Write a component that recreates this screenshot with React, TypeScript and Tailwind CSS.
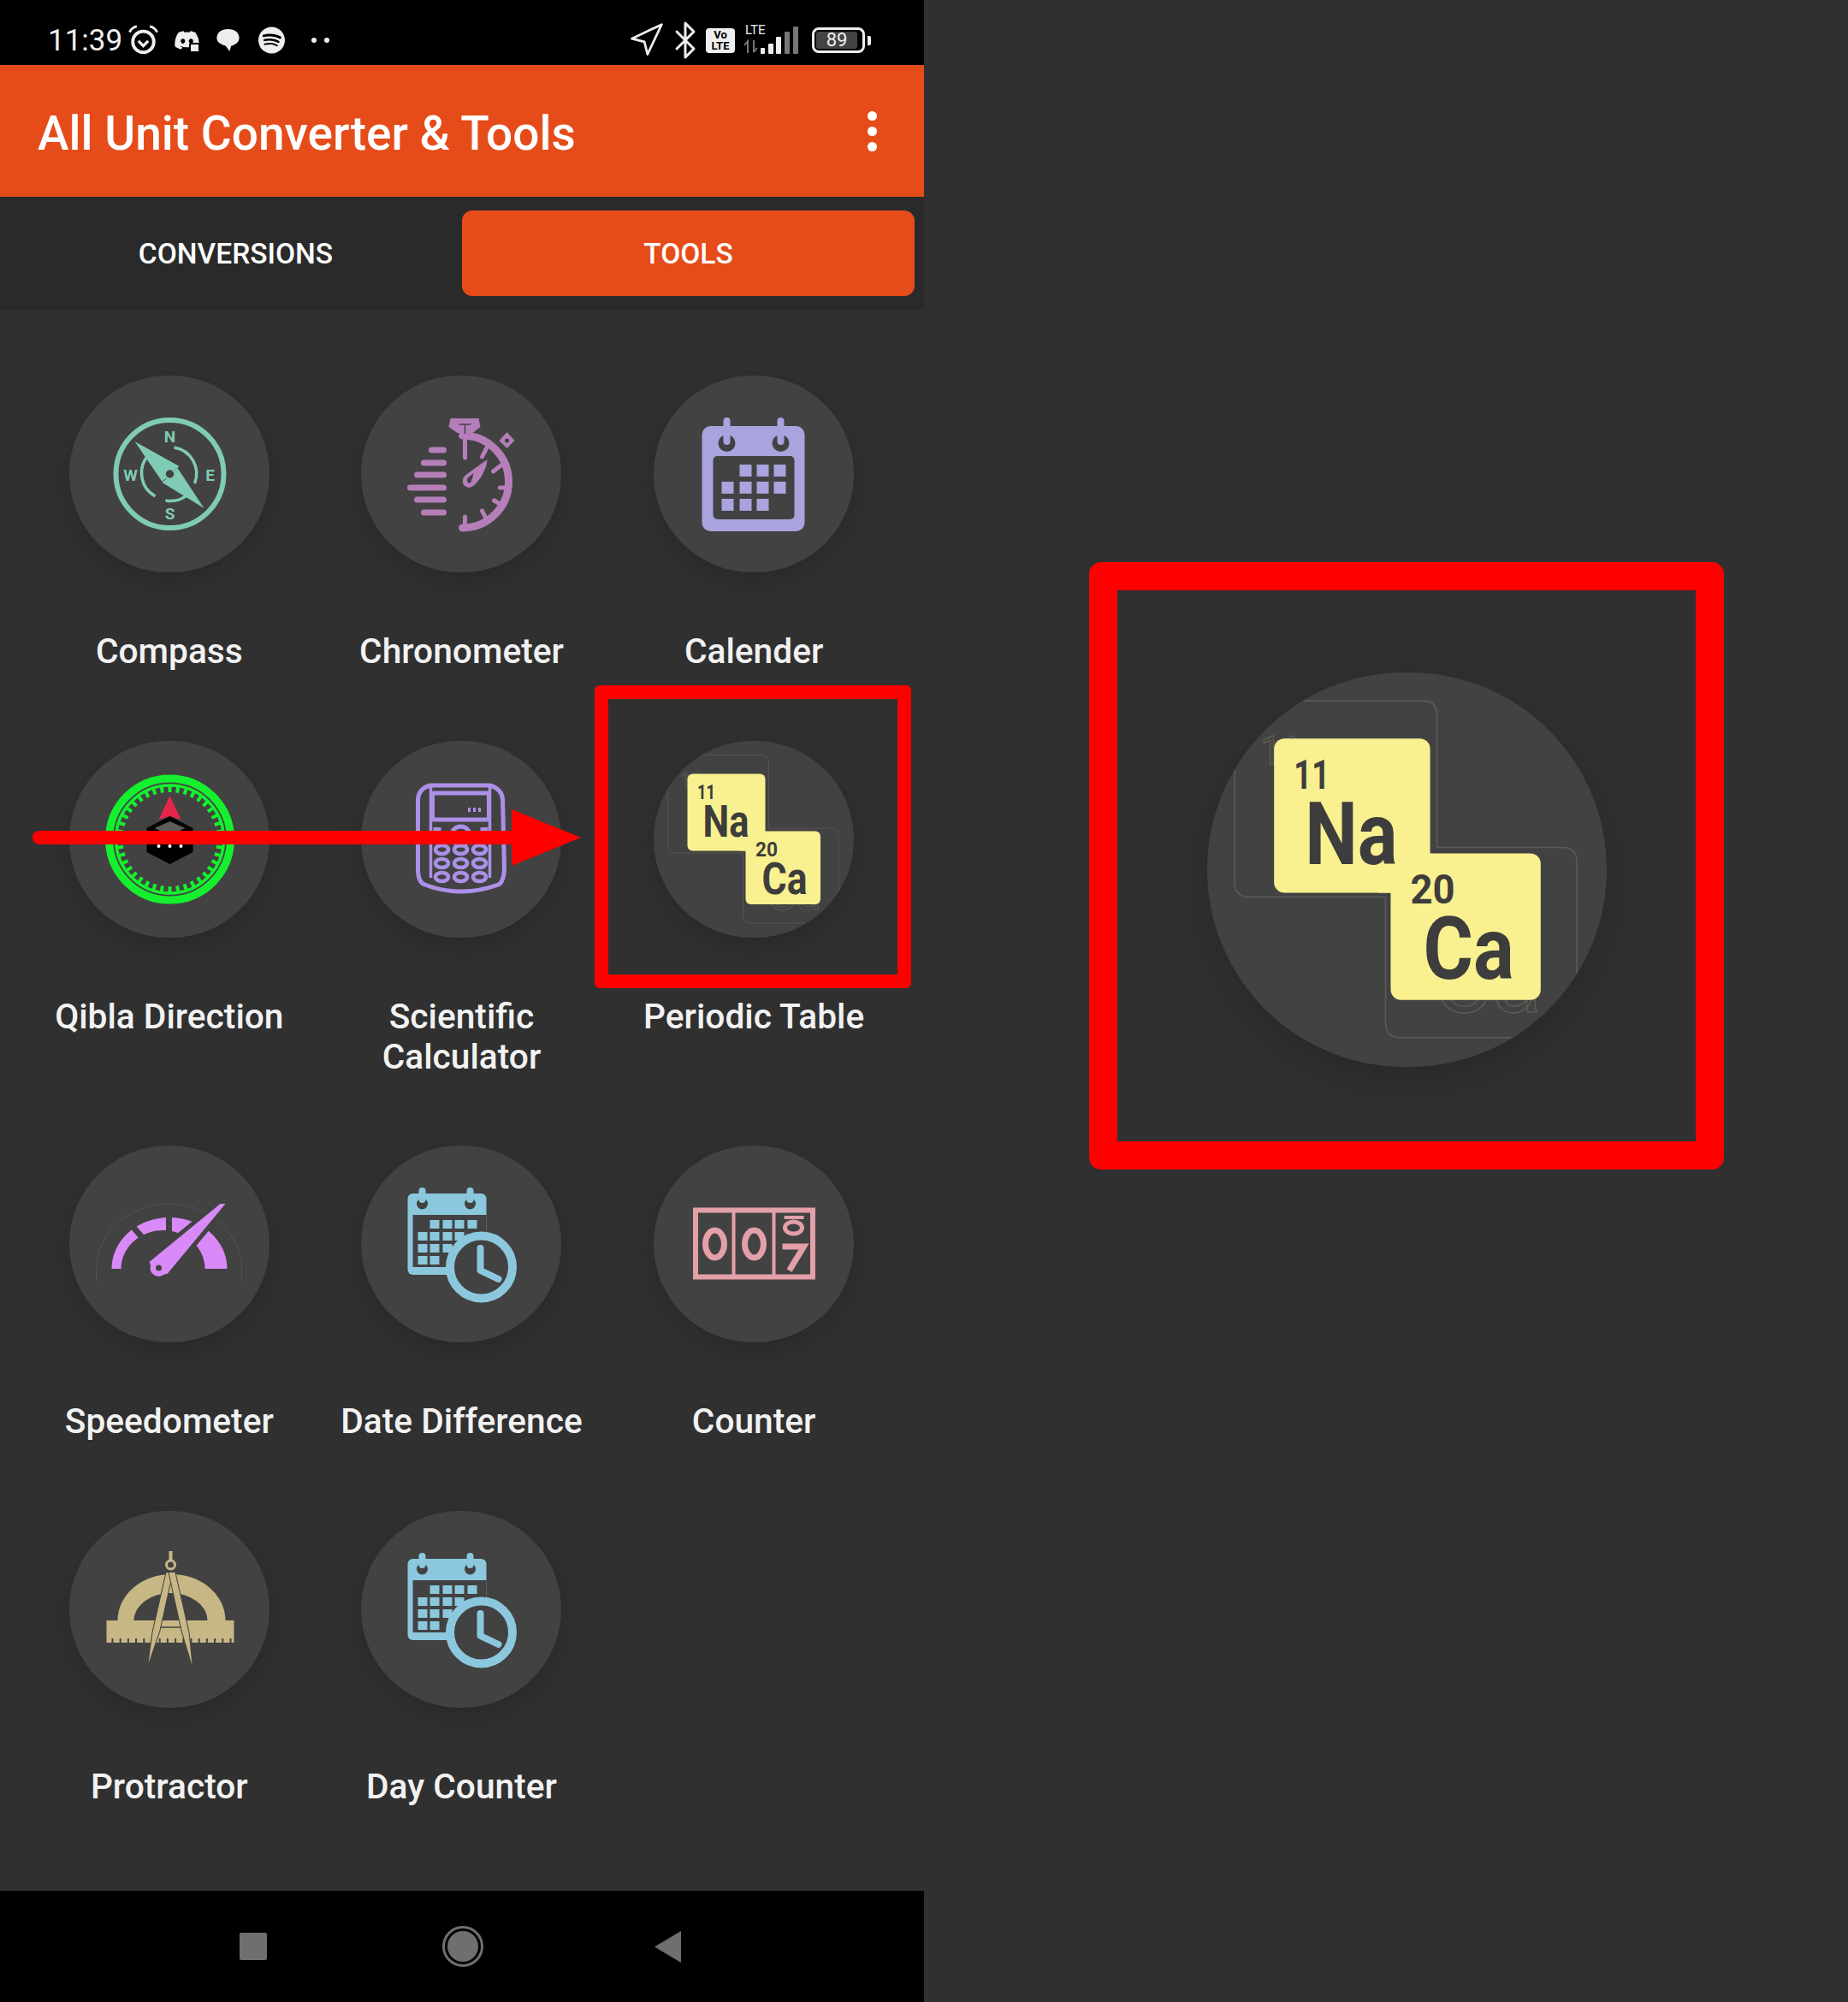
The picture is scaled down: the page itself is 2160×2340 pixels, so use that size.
import React, { useId } from 'react';
import { Bluetooth, Navigation } from 'lucide-react';
import { FaDiscord, FaSpotify } from 'react-icons/fa6';

const CIRCLE = '#424242';

const CompassIcon = () => (
  <svg viewBox="0 0 233 230" className="size-full">
    <g fill="none" stroke="#80cbb5">
      <circle cx="117" cy="115" r="63" strokeWidth="6" />
      <path d="M93 92 A 31 31 0 0 0 100 141" strokeWidth="3.5" />
      <path d="M122 84 A 31 31 0 0 1 146 126 M140 137 A 31 31 0 0 1 112 146" strokeWidth="3.5" />
    </g>
    <polygon points="76,77 128,106 108,124" fill="#80cbb5" />
    <polygon points="157,155 126,108 108,125" fill="#80cbb5" />
    <circle cx="117" cy="115" r="5.5" fill={CIRCLE} stroke="#80cbb5" strokeWidth="1.5" />
    <g fill="#80cbb5" fontFamily="Roboto, sans-serif" fontWeight="700" fontSize="19" textAnchor="middle">
      <text x="117" y="78">N</text>
      <text x="117" y="168">S</text>
      <text x="164" y="123">E</text>
      <text x="71" y="123">W</text>
    </g>
  </svg>
);

const ChronometerIcon = () => (
  <svg viewBox="0 0 233 230" className="size-full">
    <g fill="none" stroke="#b57eb9" strokeLinecap="round">
      <path d="M118 70 A 54 54 0 0 1 118 178" strokeWidth="9" />
      <g strokeWidth="7">
        <path d="M82 87H96M73 102H96M65 116H96M57 131H96M65 145H96M73 160H96" />
      </g>
      <g strokeWidth="5">
        <path d="M121 75V96M146 85L141 95M163 105L154 112M171 131H162M165 152L155 146M146 168L141 158M121 177V165" />
      </g>
    </g>
    <path d="M104 50 H137 L139 60 L130 67 H112 L102 60 Z" fill="#b57eb9" />
    <path d="M114 57H128M121 57V68" stroke={CIRCLE} strokeWidth="1.5" fill="none" />
    <polygon points="170,66 179,76 170,85 161,76" fill="#b57eb9" />
    <circle cx="170" cy="76" r="2.5" fill={CIRCLE} />
    <path d="M147 98 C 146 112 134 130 126 131 C 117 130 116 121 122 116 Z" fill="#b57eb9" />
    <path d="M127 126 C 123 125 122 122 125 119 L 131 114 C 130 119 129 123 127 126 Z" fill={CIRCLE} />
  </svg>
);

const CalendarIcon = () => {
  const cols = [79, 100, 120, 140];
  const rows: [number, number[]][] = [
    [104, [1, 2, 3]],
    [124, [0, 1, 2, 3]],
    [144, [0, 1, 2]],
  ];
  return (
    <svg viewBox="0 0 233 230" className="size-full">
      <rect x="56" y="59" width="120" height="123" rx="10" fill="#a9a3de" />
      <rect x="69" y="94" width="95" height="74" rx="5" fill={CIRCLE} />
      {[85, 148].map((x) => (
        <g key={x}>
          <ellipse cx={x} cy="79" rx="10" ry="10" fill={CIRCLE} />
          <rect x={x - 4} y="49" width="8" height="32" rx="4" fill="#a9a3de" />
        </g>
      ))}
      {rows.map(([y, list]) =>
        list.map((c) => <rect key={`${y}-${c}`} x={cols[c]} y={y} width="14" height="14" fill="#a9a3de" />)
      )}
    </svg>
  );
};

const QiblaIcon = () => {
  const ticks = Array.from({ length: 40 }, (_, i) => (i * 360) / 40);
  return (
    <svg viewBox="0 0 233 230" className="size-full">
      <circle cx="117" cy="115" r="71" fill="none" stroke="#14f02e" strokeWidth="9" />
      <circle cx="117" cy="115" r="63" fill="none" stroke="#14f02e" strokeWidth="3.5" />
      {ticks.map((a) => (
        <rect key={a} x="115" y="53" width="4" height="7" fill="#14f02e" transform={`rotate(${a} 117 115)`} />
      ))}
      <polygon points="117,64 130,92 117,88 104,92" fill="#e8244c" />
      <polygon points="117,88 144,102 144,130 117,144 90,130 90,102" fill="#000" />
      <polygon points="117,94 135,102 117,110 99,102" fill="#5c5c5c" />
      <g fill="#fff">
        <circle cx="104" cy="123" r="2" />
        <circle cx="117" cy="123" r="2" />
        <circle cx="130" cy="123" r="2" />
      </g>
    </svg>
  );
};

const CalculatorIcon = () => (
  <svg viewBox="0 0 233 230" className="size-full">
    <g fill="none" stroke="#ac90e8" strokeWidth="5">
      <path d="M66 68 Q67 56 80 52 H150 Q164 56 165 68 L167 150 Q166 165 160 168 Q116 184 74 168 Q66 165 66 150 Z" />
      <path d="M81 54 V 160 M150 54 V 160" strokeWidth="3.5" />
      <rect x="83" y="61" width="66" height="31" rx="2" />
      <circle cx="116" cy="111" r="11" />
    </g>
    <path d="M126 83V78M132 83V78M138 83V78" stroke="#ac90e8" strokeWidth="3" />
    <rect x="84" y="101" width="9" height="9" fill="#ac90e8" />
    <rect x="139" y="101" width="9" height="9" fill="#ac90e8" />
    {[127, 143, 159].map((y) =>
      [94, 116, 138].map((x) => (
        <ellipse key={`${x}-${y}`} cx={x} cy={y} rx="7.5" ry="5" fill="none" stroke="#ac90e8" strokeWidth="4.5" />
      ))
    )}
  </svg>
);

const PeriodicIcon = () => {
  const clip = useId();
  const ghost = '#5b5b55';
  const ink = '#3d3d3d';
  return (
    <svg viewBox="0 0 233 230" className="size-full" fontFamily="Roboto, sans-serif">
      <clipPath id={clip}>
        <ellipse cx="116.5" cy="115" rx="116.5" ry="115" />
      </clipPath>
      <g clipPath={`url(#${clip})`} fill="none" stroke={ghost} strokeWidth="0.8">
        <path d="M24 16.5 H126 Q134 16.5 134 25 V102 H207 Q215.5 102 215.5 110 V205 Q215.5 213 207 213 H113 Q104 213 104 204 V131 H25 Q16 131 16 122 V25 Q16 16.5 24 16.5 Z" />
        <text x="31" y="54" fontSize="24" textLength="24" lengthAdjust="spacingAndGlyphs">11</text>
        <text x="132" y="198" fontSize="50" textLength="63" lengthAdjust="spacingAndGlyphs">Ca</text>
      </g>
      <rect x="39" y="38.5" width="91" height="90" rx="6" fill="#f9f08f" />
      <rect x="107" y="105.5" width="87.5" height="85.5" rx="6" fill="#f9f08f" />
      <rect x="100" y="105.5" width="30" height="23" fill="#f9f08f" />
      <g fill={ink} fontWeight="700">
        <text x="50.5" y="68" fontSize="24" textLength="21" lengthAdjust="spacingAndGlyphs">11</text>
        <text x="57" y="112" fontSize="51" textLength="54" lengthAdjust="spacingAndGlyphs">Na</text>
        <text x="118.5" y="134.5" fontSize="24" textLength="26" lengthAdjust="spacingAndGlyphs">20</text>
        <text x="126" y="178.5" fontSize="51" textLength="53" lengthAdjust="spacingAndGlyphs">Ca</text>
      </g>
    </svg>
  );
};

const SpeedometerIcon = () => (
  <svg viewBox="0 0 233 230" className="size-full">
    <path d="M31 159 V146 A 85 78 0 0 1 201 146 V159" fill="none" stroke="#5d5560" strokeWidth="1" strokeDasharray="3 1" />
    <path d="M49 144 A 67.5 60 0 0 1 184 144 H158 A 49 45 0 0 0 60 144 Z" fill="#d98af8" />
    <path d="M66 86 L87 110 M116 68 V112" stroke={CIRCLE} strokeWidth="7" fill="none" />
    <polygon
      points="182,68 176,68 93,136 100,152 114,150"
      fill="#d98af8"
      stroke={CIRCLE}
      strokeWidth="10"
      strokeLinejoin="round"
      paintOrder="stroke"
    />
    <circle cx="104" cy="143" r="10" fill="#d98af8" />
    <circle cx="104" cy="143" r="3.5" fill={CIRCLE} />
  </svg>
);

const CalendarClockIcon = () => {
  const cols = [66, 80, 95, 109, 124];
  const rows: [number, number[]][] = [
    [87, [1, 2, 3, 4]],
    [101, [0, 1, 2, 3]],
    [115, [0, 1, 2]],
    [129, [0, 1]],
  ];
  return (
    <svg viewBox="0 0 233 230" className="size-full">
      <rect x="54" y="56" width="92" height="95" rx="6" fill="#8cc8dd" />
      <rect x="60" y="81" width="86" height="61" fill={CIRCLE} />
      {[71, 127].map((x) => (
        <g key={x}>
          <circle cx={x} cy="68" r="6.5" fill={CIRCLE} />
          <rect x={x - 4} y="49" width="8" height="18" rx="4" fill="#8cc8dd" />
        </g>
      ))}
      {rows.map(([y, list]) =>
        list.map((c) => <rect key={`${y}-${c}`} x={cols[c]} y={y} width="11" height="10" fill="#8cc8dd" />)
      )}
      <circle cx="140" cy="142" r="36.5" fill={CIRCLE} stroke="#8cc8dd" strokeWidth="10" />
      <path d="M139 120 V146 L160 156" fill="none" stroke="#8cc8dd" strokeWidth="8" strokeLinecap="round" strokeLinejoin="round" />
    </svg>
  );
};

const CounterIcon = () => (
  <svg viewBox="0 0 233 230" className="size-full">
    <g fill="none" stroke="#e3a0a8">
      <rect x="48.5" y="75.5" width="137" height="78" strokeWidth="6" />
      <path d="M93 75V154M140 75V154" strokeWidth="4" />
      <ellipse cx="71" cy="115" rx="11" ry="16" strokeWidth="7" />
      <ellipse cx="117" cy="115" rx="11" ry="16" strokeWidth="7" />
      <ellipse cx="163" cy="96" rx="10" ry="7" strokeWidth="5" />
      <path d="M152 84 H175" strokeWidth="4" />
      <path d="M150 118 H175 L158 146" strokeWidth="7" />
    </g>
  </svg>
);

const ProtractorIcon = () => {
  const notches = Array.from({ length: 16 }, (_, i) => 49 + i * 9.2);
  return (
    <svg viewBox="0 0 233 230" className="size-full">
      <path d="M56 128 A 63 54 0 0 1 182 128 H161 A 43 32 0 0 0 75 128 Z" fill="#c7b785" />
      <rect x="43" y="128" width="149" height="26" fill="#c7b785" />
      {notches.map((x) => (
        <rect key={x} x={x} y="149" width="2" height="5" fill={CIRCLE} />
      ))}
      <rect x="116" y="47" width="4" height="14" fill="#c7b785" />
      <polygon points="113,72 97,142 92,178 105,140 120,72" fill="#c7b785" stroke={CIRCLE} strokeWidth="2" paintOrder="stroke" />
      <polygon points="123,72 139,142 143,180 131,140 116,72" fill="#c7b785" stroke={CIRCLE} strokeWidth="2" paintOrder="stroke" />
      <circle cx="118" cy="63" r="5" fill={CIRCLE} stroke="#c7b785" strokeWidth="3" />
      <path d="M106 136 H130" stroke={CIRCLE} strokeWidth="1.5" />
    </svg>
  );
};

const AlarmIcon = () => (
  <svg viewBox="0 0 40 38" className="w-[39px] h-[36px] ml-[10px]" fill="none" stroke="#eee">
    <circle cx="20" cy="21" r="13" strokeWidth="4" />
    <path d="M14 20 L20 26 L26 20" strokeWidth="3.5" />
    <path d="M3 9 Q6 3 12 2 M37 9 Q34 3 28 2" strokeWidth="3" />
  </svg>
);

const SignalIcon = () => (
  <svg viewBox="0 0 65 32" className="w-[65px] h-[32px]">
    <path d="M5 18 V31 M1 22 L5 17 L5 31 M12 16 V30 M12 30 L16 25" stroke="#777" strokeWidth="2" fill="none" />
    <rect x="20" y="25" width="5" height="7" rx="1" fill="#eee" />
    <rect x="29" y="20" width="6" height="12" rx="1" fill="#eee" />
    <rect x="38" y="12" width="6" height="20" rx="1" fill="#eee" />
    <rect x="48" y="6" width="6" height="26" rx="1" fill="#777" />
    <rect x="58" y="0" width="6" height="32" rx="1" fill="#777" />
  </svg>
);

const tools: { name: string; icon: React.FC; lines?: string[] }[] = [
  { name: 'Compass', icon: CompassIcon },
  { name: 'Chronometer', icon: ChronometerIcon },
  { name: 'Calender', icon: CalendarIcon },
  { name: 'Qibla Direction', icon: QiblaIcon },
  { name: 'Scientific Calculator', icon: CalculatorIcon, lines: ['Scientific', 'Calculator'] },
  { name: 'Periodic Table', icon: PeriodicIcon },
  { name: 'Speedometer', icon: SpeedometerIcon },
  { name: 'Date Difference', icon: CalendarClockIcon },
  { name: 'Counter', icon: CounterIcon },
  { name: 'Protractor', icon: ProtractorIcon },
  { name: 'Day Counter', icon: CalendarClockIcon },
];

const StatusBar = () => (
  <div className="h-[76px] bg-black flex items-center justify-between pl-[56px] pr-[62px] pt-[18px] text-[#eeeeee] shrink-0">
    <div className="flex items-center">
      <span className="text-[35px] leading-none w-[82px]">11:39</span>
      <AlarmIcon />
      <div className="relative ml-[16px]">
        <FaDiscord className="w-[31px] h-[28px]" />
        <div className="absolute -bottom-[1px] right-0 w-[13px] h-[12px] rounded-[2px] bg-[#eeeeee] border-[2px] border-black" />
      </div>
      <svg viewBox="0 0 30 30" className="w-[29px] h-[28px] ml-[18px]" fill="#eee">
        <path d="M15 1 C 24 1 29 6 29 12 C 29 18 23 21 19 22 L 17 29 L 12 22 C 6 20 1 18 1 12 C 1 6 6 1 15 1 Z" />
      </svg>
      <FaSpotify className="w-[33px] h-[32px] ml-[20px]" />
      <div className="flex gap-[9px] ml-[30px]">
        <div className="size-[6px] rounded-full bg-[#eeeeee]" />
        <div className="size-[6px] rounded-full bg-[#eeeeee]" />
      </div>
    </div>
    <div className="flex items-center">
      <Navigation className="w-[44px] h-[44px]" strokeWidth={1.5} />
      <Bluetooth className="w-[48px] h-[48px]" strokeWidth={1.5} />
      <div className="w-[34px] h-[29px] rounded-[4px] bg-[#eeeeee] text-black text-[13px] leading-[13px] font-bold text-center pt-[1px]">
        <div>Vo</div>
        <div>LTE</div>
      </div>
      <div className="relative w-[65px] h-[32px] ml-[10px]">
        <SignalIcon />
        <span className="absolute -top-[3px] left-[2px] text-[15px] leading-none">LTE</span>
      </div>
      <div className="ml-[15px] w-[62px] h-[30px] rounded-[8px] border-[3px] border-[#eeeeee] p-[2px]">
        <div className="h-full w-[48px] rounded-[3px] bg-[#444444] text-[22px] leading-[20px] text-center">89</div>
      </div>
      <div className="w-[4px] h-[11px] ml-[3px] rounded-r-[2px] bg-[#eeeeee]" />
    </div>
  </div>
);

const AppBar = () => (
  <div className="h-[154px] bg-[#e54c19] flex items-center justify-between pl-[44px] pr-[55px] shrink-0">
    <span className="text-[55px] font-medium text-white leading-none mt-[6px]">All Unit Converter &amp; Tools</span>
    <div className="flex flex-col gap-[7px]">
      <div className="size-[11px] rounded-full bg-white" />
      <div className="size-[11px] rounded-full bg-white" />
      <div className="size-[11px] rounded-full bg-white" />
    </div>
  </div>
);

const Tabs = () => (
  <div className="h-[132px] bg-[#2a2a2a] flex px-[11px] py-[16px] shrink-0 text-[33.5px] font-medium text-white">
    <div className="flex-1 flex items-center justify-center pt-[3px]">CONVERSIONS</div>
    <div className="flex-1 flex items-center justify-center pt-[3px] rounded-[12px] bg-[#e54c19]">TOOLS</div>
  </div>
);

const NavBar = () => (
  <div className="h-[130px] bg-black flex items-center pl-[280px] shrink-0">
    <div className="w-[32px] h-[32px] rounded-[2px] bg-[#6f6f6f]" />
    <div className="ml-[205px] size-[48px] rounded-full border-[3px] border-[#6f6f6f] p-[3px]">
      <div className="size-full rounded-full bg-[#6f6f6f]" />
    </div>
    <svg viewBox="0 0 31 37" className="ml-[200px] w-[31px] h-[37px]">
      <polygon points="31,0 31,37 0,18.5" fill="#6f6f6f" />
    </svg>
  </div>
);

export default function App() {
  return (
    <div className="w-[2160px] h-[2340px] flex bg-[#303030] overflow-hidden" style={{ fontFamily: 'Roboto, sans-serif' }}>
      <div className="relative w-[1080px] h-full flex flex-col">
        <StatusBar />
        <AppBar />
        <Tabs />

        <div className="flex-1 bg-[#303030] grid grid-cols-3 content-start gap-y-[80.5px] pl-[27px] pr-[28px] pt-[77px]">
          {tools.map((tool) => {
            const Icon = tool.icon;
            return (
              <div key={tool.name} className="flex flex-col items-center">
                <div className="w-[234px] h-[230px] rounded-full bg-[#424242] shadow-[0_10px_30px_rgba(0,0,0,0.16)]">
                  <Icon />
                </div>
                <div className="mt-[69px] text-[40.7px] leading-[47px] font-medium text-[#f2f2f2] text-center whitespace-nowrap">
                  {tool.lines ? tool.lines.map((l) => <div key={l}>{l}</div>) : tool.name}
                </div>
              </div>
            );
          })}
        </div>

        <NavBar />

        {/* annotations drawn over the screenshot */}
        <div className="absolute left-[695px] top-[801px] w-[370px] h-[354px] border-[16px] border-[#ff0000] rounded-[6px]" />
        <svg viewBox="0 0 660 70" className="absolute left-[36px] top-[945px] w-[660px] h-[70px]">
          <path d="M10 34 H570" stroke="#ff0000" strokeWidth="16" strokeLinecap="round" />
          <polygon points="562,1 643,34 562,67" fill="#ff0000" />
        </svg>
      </div>

      <div className="flex-1 pl-[193px] pt-[657px]">
        <div className="w-[742px] h-[710px] border-[33px] border-[#ff0000] rounded-[14px] flex items-center justify-center pt-[9px]">
          <div className="w-[467px] h-[461px] rounded-full bg-[#424242] shadow-[0_16px_50px_rgba(0,0,0,0.16)]">
            <PeriodicIcon />
          </div>
        </div>
      </div>
    </div>
  );
}
